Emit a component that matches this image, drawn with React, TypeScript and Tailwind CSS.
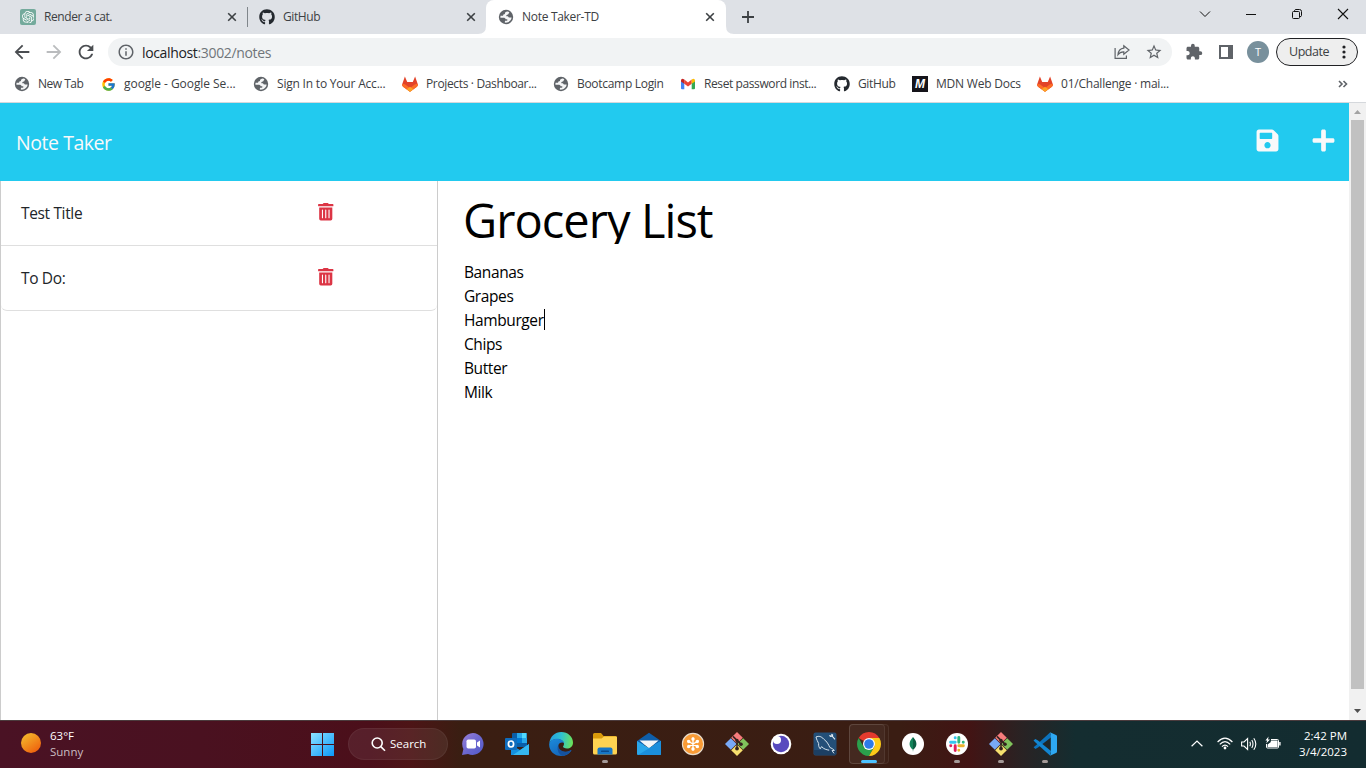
import React from "react";
import { FaGithub, FaPlus, FaSave, FaTrashAlt } from "react-icons/fa";
import { FcGoogle } from "react-icons/fc";
import { SiOpenai } from "react-icons/si";
import {
  MdArrowBack,
  MdArrowForward,
  MdExtension,
  MdInfoOutline,
  MdRefresh,
  MdStarBorder,
} from "react-icons/md";

/* ---------- small drawings ---------- */

function Globe() {
  return (
    <svg width="16" height="16" viewBox="0 0 16 16">
      <circle cx="8" cy="8" r="7.2" fill="#5f6368" />
      <path
        d="M9.4 2.4 C7.4 2.8 6.6 3.8 7 4.9 L5.4 5.6 L5 6.7 H2.6 C2.3 7.6 2.3 8.2 2.5 8.8 H5.2 C7 8.8 7.4 9.4 7.6 10.2 H8.8 C9.8 10.4 9.6 11.6 8.6 11.7 L7 11.8 L6.8 13.6 C10.6 14 13.4 11.6 13.6 8.6 H11.6 C10.4 8.6 10.4 7.6 10 7.2 H8.4 C8 6.4 8.8 5.8 9.8 5.6 C10.8 5.2 10.4 4 11.4 3.4 C10.8 2.8 10.2 2.4 9.4 2.4Z"
        fill="#f4f5f6"
      />
    </svg>
  );
}

function Gitlab() {
  return (
    <svg width="16" height="16" viewBox="0 0 16 16">
      <path d="M2.9 0.6 L5.2 6 H10.8 L13.1 0.6 L15.9 8.4 Q16 10 14.6 11 L8 15.8 L1.4 11 Q0 10 0.1 8.4Z" fill="#e24329" />
      <path d="M0.1 8.2 Q2.6 7.8 4.6 9.4 L8 12 L11.4 9.4 Q13.4 7.8 15.9 8.2 Q16 10 14.6 11 L8 15.8 L1.4 11 Q0 10 0.1 8.2Z" fill="#fc6d26" />
      <path d="M4.6 13.3 L8 10.8 L11.4 13.3 L8 15.8Z" fill="#fca326" />
    </svg>
  );
}

function Gmail() {
  return (
    <svg width="16" height="16" viewBox="0 0 16 16">
      <path d="M1 4.2 L4.3 6.6 V13.3 H2 Q1 13.3 1 12.3Z" fill="#4285f4" />
      <path d="M15 4.2 L11.7 6.6 V13.3 H14 Q15 13.3 15 12.3Z" fill="#34a853" />
      <path d="M4.3 3.6 L8 6.4 L11.7 3.6 V7.8 L8 10.6 L4.3 7.8Z" fill="#ea4335" />
      <path d="M1 4.5 Q1 2.7 2.6 2.7 L4.3 3.6 V7.8 L1 5.4Z" fill="#c5221f" />
      <path d="M15 4.5 Q15 2.7 13.4 2.7 L11.7 3.6 V7.8 L15 5.4Z" fill="#fbbc04" />
    </svg>
  );
}

function Mdn() {
  return (
    <span className="flex h-4 w-4 items-center justify-center bg-[#15141a] font-['Liberation_Sans',sans-serif] text-[12px] font-bold text-white italic">
      M
    </span>
  );
}

function Cross() {
  return (
    <svg width="10" height="10" viewBox="0 0 10 10" stroke="#3c4043" strokeWidth="1.6">
      <path d="M1.2 1.2 L8.8 8.8 M8.8 1.2 L1.2 8.8" />
    </svg>
  );
}

function Share() {
  return (
    <svg width="16" height="16" viewBox="0 0 16 16" fill="none" stroke="#5f6368" strokeWidth="1.2">
      <path d="M1.1 4 V14.4 H12.4 V11.6" />
      <path d="M9.8 1.8 L15 6 L9.8 10.2 V7.8 C7.2 7.7 5.4 8.6 4 10.6 C4.3 7.4 6.4 4.6 9.8 4.2Z" />
    </svg>
  );
}

/* ---------- browser window ---------- */

function TabStrip() {
  return (
    <div className="flex h-[34px] bg-[#dee1e6] text-[12px] text-[#3c4043]">
      <div className="flex w-[248px] items-center pl-5">
        <span className="flex h-4 w-4 items-center justify-center rounded-[2px] bg-[#74aa9c]">
          <SiOpenai size={12.5} color="#fff" />
        </span>
        <span className="ml-2 flex-1 tracking-[-0.4px]">Render a cat.</span>
        <span className="mr-[10px]"><Cross /></span>
        <span className="h-5 w-px bg-[#80868b]" />
      </div>
      <div className="flex w-[238px] items-center pl-[11px]">
        <FaGithub size={16} color="#24292f" />
        <span className="ml-2 flex-1 tracking-[-0.4px]">GitHub</span>
        <span className="mr-[10px]"><Cross /></span>
      </div>
      <div className="relative flex w-[240px] items-center rounded-t-[8px] bg-white pl-3">
        <svg className="absolute -left-2 bottom-0" width="8" height="8" viewBox="0 0 8 8">
          <path d="M8 0 V8 H0 Q8 8 8 0Z" fill="#fff" />
        </svg>
        <svg className="absolute -right-2 bottom-0" width="8" height="8" viewBox="0 0 8 8">
          <path d="M0 0 V8 H8 Q0 8 0 0Z" fill="#fff" />
        </svg>
        <Globe />
        <span className="ml-2 flex-1 tracking-[-0.3px]">Note Taker-TD</span>
        <span className="mr-[11px]"><Cross /></span>
      </div>
      <div className="flex flex-1 items-center pl-4">
        <svg width="12" height="12" viewBox="0 0 12 12" stroke="#3c4043" strokeWidth="1.8">
          <path d="M6 0 V12 M0 6 H12" />
        </svg>
      </div>
      <div className="flex items-center pr-[17px] pb-[6px] text-[#111]">
        <svg width="12" height="12" viewBox="0 0 12 12" fill="none" stroke="currentColor" strokeWidth="1">
          <path d="M1 3.5 L6 8.5 L11 3.5" />
        </svg>
        <svg className="ml-[34px]" width="12" height="12" viewBox="0 0 12 12" stroke="currentColor">
          <path d="M1 6.5 H11" />
        </svg>
        <svg className="ml-[34px]" width="12" height="12" viewBox="0 0 12 12" fill="none" stroke="currentColor">
          <rect x="1.5" y="3.5" width="7" height="7" rx="1" />
          <path d="M3.5 3 V2.5 Q4 1.5 5 1.5 H8.5 Q10.5 1.5 10.5 3.5 V7.5 Q10.5 8.5 9 8.8" />
        </svg>
        <svg className="ml-[34px]" width="12" height="12" viewBox="0 0 12 12" stroke="currentColor" strokeWidth="1.1">
          <path d="M1 1 L11 11 M11 1 L1 11" />
        </svg>
      </div>
    </div>
  );
}

function Toolbar() {
  return (
    <div className="flex h-9 items-center bg-white pl-[11px]">
      <MdArrowBack size={22} color="#4a4d51" />
      <MdArrowForward className="ml-[10px]" size={22} color="#babcbe" />
      <MdRefresh className="ml-[10px]" size={22} color="#4a4d51" />
      <div className="ml-[11px] flex h-7 w-[1064px] items-center rounded-full bg-[#f1f3f4] pl-[9px]">
        <MdInfoOutline size={18} color="#5f6368" />
        <span className="ml-[7px] flex-1 text-[14px] tracking-[-0.35px] text-[#70757a]">
          <span className="text-[#202124]">localhost</span>:3002/notes
        </span>
        <Share />
        <MdStarBorder className="mr-[9px] ml-[15px]" size={18} color="#5f6368" />
      </div>
      <MdExtension className="ml-[13px]" size={18} color="#5f6368" />
      <span className="ml-4 h-[14px] w-[14px] border-2 border-r-[5px] border-[#5f6368]" />
      <span className="ml-[14px] flex h-[22px] w-[22px] items-center justify-center rounded-full bg-[#78909c] text-[11px] text-white">
        T
      </span>
      <div className="ml-[7px] flex h-7 w-[82px] items-center rounded-full border border-[#202124] bg-[#eeeeee] pl-3">
        <span className="flex-1 text-[12.5px] tracking-[-0.45px] text-[#3c4043]">Update</span>
        <svg className="mr-[11px]" width="4" height="14" viewBox="0 0 4 14" fill="#202124">
          <circle cx="2" cy="2" r="1.6" />
          <circle cx="2" cy="7" r="1.6" />
          <circle cx="2" cy="12" r="1.6" />
        </svg>
      </div>
    </div>
  );
}

function Bookmark({ icon, label, className }: { icon: React.ReactNode; label: string; className: string }) {
  return (
    <div className={`flex shrink-0 items-center gap-2 whitespace-nowrap ${className}`}>
      <span className="flex h-4 w-4 shrink-0 items-center justify-center tracking-normal">{icon}</span>
      <span>{label}</span>
    </div>
  );
}

function BookmarksBar() {
  return (
    <div className="flex h-[33px] items-center border-b border-[#d5d8dc] bg-white pb-1 pl-[14px] text-[12px] text-[#3c4043]">
      <Bookmark className="w-[86px] tracking-[-0.5px]" icon={<Globe />} label="New Tab" />
      <Bookmark className="w-[153px] tracking-[-0.05px]" icon={<FcGoogle size={15} />} label="google - Google Se..." />
      <Bookmark className="w-[149px] tracking-[-0.2px]" icon={<Globe />} label="Sign In to Your Acc..." />
      <Bookmark className="w-[151px] tracking-[-0.35px]" icon={<Gitlab />} label="Projects · Dashboar..." />
      <Bookmark className="w-[127px] tracking-[-0.3px]" icon={<Globe />} label="Bootcamp Login" />
      <Bookmark className="w-[154px] tracking-[-0.4px]" icon={<Gmail />} label="Reset password inst..." />
      <Bookmark className="w-[78px] tracking-[-0.35px]" icon={<FaGithub size={16} color="#24292f" />} label="GitHub" />
      <Bookmark className="w-[125px] tracking-[-0.22px]" icon={<Mdn />} label="MDN Web Docs" />
      <Bookmark className="flex-1 tracking-[-0.23px]" icon={<Gitlab />} label="01/Challenge · mai..." />
      <svg className="mr-[18px]" width="10" height="8" viewBox="0 0 10 8" fill="none" stroke="#5f6368" strokeWidth="1.6">
        <path d="M1 1 L4 4 L1 7 M5.5 1 L8.5 4 L5.5 7" />
      </svg>
    </div>
  );
}

/* ---------- note taker page ---------- */

const notes = ["Test Title", "To Do:"];
const groceries = ["Bananas", "Grapes", "Hamburger", "Chips", "Butter", "Milk"];

function NotePage() {
  return (
    <div className="flex h-[617px] bg-white">
      <div className="flex w-[1349px] flex-col">
        <header className="flex h-[78px] shrink-0 items-center bg-[#22caef] pr-[13px] pl-4 text-[#f8f9fa]">
          <span className="flex-1 pt-0.5 text-[19.5px] tracking-[-0.45px]">Note Taker</span>
          <FaSave className="mb-[3px]" size={25} />
          <FaPlus className="mb-[3px] ml-[31px]" size={25} />
        </header>
        <div className="flex flex-1">
          <aside className="w-[438px] border-x border-[#ccc]">
            <ul className="rounded-b-[6px] border-b border-[#dfdfdf] text-[15.5px] tracking-[-0.35px] text-[#212529]">
              {notes.map((note, i) => (
                <li
                  key={note}
                  className={`flex items-center pl-5 ${i === 0 ? "h-[65px] border-b border-[#dfdfdf]" : "h-16"}`}
                >
                  <span className="w-[296px] pt-px">{note}</span>
                  <FaTrashAlt className="mb-0.5" size={17.5} color="#dc3545" />
                </li>
              ))}
            </ul>
          </aside>
          <main className="flex-1 pl-[25px] text-black">
            <h1 className="mt-2 h-[55px] overflow-hidden text-[47px] leading-[63px] tracking-[-0.95px] whitespace-nowrap">
              Grocery List
            </h1>
            <div className="mt-4 pl-px text-[15.5px] leading-6 tracking-[-0.4px]">
              {groceries.map((item) => (
                <div key={item} className="flex items-center">
                  {item}
                  {item === "Hamburger" && <span className="mb-0.5 h-[21px] w-px bg-black" />}
                </div>
              ))}
            </div>
          </main>
        </div>
      </div>
      <div className="flex w-[17px] flex-col items-center justify-between bg-[#f1f1f1]">
        <svg width="17" height="17" viewBox="0 0 17 17">
          <path d="M5 11 L8.5 7 L12 11Z" fill="#a3a3a3" />
        </svg>
        <div className="mb-[14px] h-[569px] w-[13px] bg-[#c1c1c1]" />
        <svg width="17" height="17" viewBox="0 0 17 17">
          <path d="M5 6 L12 6 L8.5 10Z" fill="#505050" />
        </svg>
      </div>
    </div>
  );
}

/* ---------- taskbar ---------- */

function Meet() {
  return (
    <svg width="24" height="24" viewBox="0 0 24 24">
      <defs>
        <linearGradient id="meet" x1="0" y1="0" x2="1" y2="1">
          <stop offset="0" stopColor="#9a80d8" />
          <stop offset="0.5" stopColor="#6d68cf" />
          <stop offset="1" stopColor="#5059c9" />
        </linearGradient>
      </defs>
      <path d="M12 1 A11 11 0 1 1 7 22 L1 23 L2.4 17 A11 11 0 0 1 12 1Z" fill="url(#meet)" />
      <rect x="5.5" y="7.5" width="9.5" height="9" rx="1.8" fill="#fff" />
      <path d="M16 10.5 L19 8.5 V15.5 L16 13.5Z" fill="#fff" />
    </svg>
  );
}

function Outlook() {
  return (
    <svg width="24" height="24" viewBox="0 0 24 24">
      <rect x="7" y="1" width="15" height="14" rx="1" fill="#0a5ea8" />
      <path d="M12 1 H17 V6 H12Z" fill="#28a8ea" />
      <path d="M17 1 H21.5 V6 H17Z" fill="#50d9ff" />
      <path d="M12 6 H17 V11 H12Z" fill="#0078d4" />
      <path d="M17 6 H22 V11 H17Z" fill="#28a8ea" />
      <path d="M6 23 V13 L15 18 L24 12 V22 Q24 23 23 23Z" fill="#1490df" />
      <path d="M8 23 L24 12 V22 Q24 23 23 23Z" fill="#35b8f1" />
      <rect x="0" y="6" width="12" height="12" rx="1" fill="#0f6cbd" />
      <ellipse cx="6" cy="12" rx="2.6" ry="3" fill="none" stroke="#fff" strokeWidth="1.7" />
    </svg>
  );
}

function Edge() {
  return (
    <svg width="24" height="24" viewBox="0 0 24 24">
      <defs>
        <linearGradient id="edgeTop" x1="0" y1="0.3" x2="1" y2="0.4">
          <stop offset="0" stopColor="#249ee0" />
          <stop offset="0.5" stopColor="#2fc2d0" />
          <stop offset="1" stopColor="#6be35a" />
        </linearGradient>
        <linearGradient id="edgeLow" x1="0" y1="0" x2="0.6" y2="1">
          <stop offset="0" stopColor="#1b8bdc" />
          <stop offset="1" stopColor="#1464b8" />
        </linearGradient>
      </defs>
      <path d="M0.3 11 C1.2 4.4 6.2 0 12.2 0 C19 0 24 5 24 10.4 C24 14.4 21 16.4 18 16.4 C15.4 16.4 14 15.6 14 14.8 C14 14 15 13.6 15 11.8 C15 9.4 12 7 8.4 7 C4.4 7 1.4 9 0.3 11Z" fill="url(#edgeTop)" />
      <path d="M0.2 12 C0.6 9 4 6.8 8.2 6.8 C12 6.8 15 9 15.2 11.6 C14.4 9.8 9.6 10 9.2 14 C9 18.4 14 21 19 19.4 C21 18.6 22 17.8 22.4 18.4 C20 22 16.4 24 12.2 24 C5 24 -0.2 18.4 0.2 12Z" fill="url(#edgeLow)" />
      <path d="M9.4 13 C7.6 16 8.8 22 13.4 23.9 C17 23.6 20.4 21.8 22.4 18.6 C22.2 17.8 21 18.8 19 19.4 C14 20.8 9 17.6 9.4 13Z" fill="#15529f" />
    </svg>
  );
}

function Folder() {
  return (
    <svg width="24" height="24" viewBox="0 0 24 24">
      <path d="M0 2.5 Q0 1 1.5 1 H8 L10.6 4 H22.5 Q24 4 24 5.5 V9 H0Z" fill="#d99a0b" />
      <path d="M0 6.5 H8.6 L11 4.5 H23 Q24 4.5 24 5.5 V21 Q24 22.5 22.4 22.5 H1.6 Q0 22.5 0 21Z" fill="#ffd351" />
      <path d="M4.5 22.5 V17.5 Q4.5 15.5 6.5 15.5 H17.5 Q19.5 15.5 19.5 17.5 V22.5Z" fill="#1777c6" />
      <rect x="8" y="18.6" width="8" height="1.5" rx="0.7" fill="#0a4a8c" />
    </svg>
  );
}

function Mail() {
  return (
    <svg width="24" height="24" viewBox="0 0 24 24">
      <path d="M0 9 L12 0.8 L24 9 V13 H0Z" fill="#0f5ea9" />
      <path d="M2.5 8.5 H21.5 L12 16.5Z" fill="#f3f6f8" />
      <path d="M0 9 L12 16 L24 9 V22 Q24 23 23 23 H1 Q0 23 0 22Z" fill="#2aa7ea" />
      <path d="M1 23 L24 9 V22 Q24 23 23 23Z" fill="#1b8fdc" />
    </svg>
  );
}

function Snowflake() {
  return (
    <svg width="24" height="24" viewBox="0 0 24 24">
      <circle cx="12" cy="12" r="10.6" fill="#f99b36" stroke="#e9dccb" strokeWidth="1.1" />
      <g stroke="#fff" strokeWidth="1.3" strokeLinecap="round">
        <path d="M12 6 V18 M6.8 9 L17.2 15 M17.2 9 L6.8 15" />
      </g>
      <g fill="#fff">
        <circle cx="12" cy="7" r="1.7" />
        <circle cx="12" cy="17" r="1.7" />
        <circle cx="7.7" cy="9.5" r="1.7" />
        <circle cx="16.3" cy="9.5" r="1.7" />
        <circle cx="7.7" cy="14.5" r="1.7" />
        <circle cx="16.3" cy="14.5" r="1.7" />
      </g>
    </svg>
  );
}

function GitBash() {
  return (
    <svg width="24" height="24" viewBox="0 0 24 24">
      <path d="M12 0 L17.8 5.8 L12 11.6 L6.2 5.8Z" fill="#f77c7c" />
      <path d="M18.2 6.2 L24 12 L18.2 17.8 L12.4 12Z" fill="#80c35c" />
      <path d="M5.8 6.2 L11.6 12 L5.8 17.8 L0 12Z" fill="#78a9f7" />
      <path d="M12 12.4 L17.8 18.2 L12 24 L6.2 18.2Z" fill="#f6df6e" />
      <g stroke="#33221e" strokeWidth="1.5" fill="none">
        <path d="M8 4.4 L12 8.4 V17 M12 8.6 L16.4 12.4" />
      </g>
      <g fill="#33221e">
        <circle cx="12" cy="8.4" r="1.7" />
        <circle cx="16" cy="12.2" r="1.8" />
        <circle cx="12" cy="16.6" r="1.9" />
      </g>
    </svg>
  );
}

function Insomnia() {
  return (
    <svg width="24" height="24" viewBox="0 0 24 24">
      <circle cx="12" cy="12" r="10.3" fill="#fff" />
      <circle cx="12" cy="12" r="8.2" fill="#5849be" />
      <circle cx="8" cy="8" r="4" fill="#fff" />
    </svg>
  );
}

function Workbench() {
  return (
    <svg width="24" height="24" viewBox="0 0 24 24">
      <rect x="0.5" y="0.5" width="23" height="23" rx="2" fill="#234f78" />
      <path d="M1 18 H23 V22 Q23 23 22 23 H2 Q1 23 1 22Z" fill="#1c3f63" />
      <path d="M3 5 C6 3.6 8.6 4.6 10.6 7 C14 9.4 15.6 12.6 16.8 15.4 C18.4 16 20 17 21.4 18.4 L19 18.6 L21 21.4 M3 5 C3.6 7.8 4.8 9.6 5.6 11.4 C5.4 14 6.2 15.8 7.2 16.8 L8.6 14.6 C10.8 17 13.4 17.8 16.2 18.2" fill="none" stroke="#d6e2ec" strokeWidth="1" />
      <path d="M16 3 L17 5 L19 4.8 L21.6 7.8 L22.4 7 L20 4.2 L20.2 2.4 L18 1.8 L18.6 3.6Z" fill="#e5edf3" />
    </svg>
  );
}

function ChromeLogo() {
  return (
    <svg width="24" height="24" viewBox="0 0 24 24">
      <path d="M12 0 A12 12 0 0 1 22.39 6 H12 L6.8 9 L1.61 6 A12 12 0 0 1 12 0Z" fill="#e33b2e" />
      <path d="M1.61 6 A12 12 0 0 0 12 24 L17.2 15 L12 17 L6.8 15Z" fill="#2aa04c" />
      <path d="M22.39 6 A12 12 0 0 1 12 24 L17.2 15 Q18.6 9 12 6Z" fill="#fccb18" />
      <circle cx="12" cy="12" r="6" fill="#fff" />
      <circle cx="12" cy="12" r="4.8" fill="#2c7bea" />
    </svg>
  );
}

function Mongo() {
  return (
    <svg width="24" height="24" viewBox="0 0 24 24">
      <circle cx="12" cy="12" r="11" fill="#fff" />
      <path d="M12 5 C9.2 8 8.4 10.4 8.6 12.6 C8.8 15 10.4 16.8 11.7 17.6 L12 20Z" fill="#12845a" />
      <path d="M12 5 C14.8 8 15.6 10.4 15.4 12.6 C15.2 15 13.6 16.8 12.3 17.6 L12 20Z" fill="#0b5e42" />
    </svg>
  );
}

function Slack() {
  return (
    <svg width="24" height="24" viewBox="0 0 24 24">
      <circle cx="12" cy="12" r="11" fill="#fff" />
      <g fill="none" strokeWidth="2.9" strokeLinecap="round">
        <path d="M10.2 5.8 V5.9 M5.6 10.2 H10.2" stroke="#36c5f0" />
        <path d="M13.8 5.4 V10.2 M18.2 10.2 H18.3" stroke="#2eb67d" />
        <path d="M13.8 13.8 H18.4 M13.8 18.2 V18.3" stroke="#ecb22e" />
        <path d="M10.2 13.8 V18.6 M5.7 13.8 H5.8" stroke="#e01e5a" />
      </g>
    </svg>
  );
}

function VsCode() {
  return (
    <svg width="24" height="24" viewBox="0 0 24 24">
      <path d="M17 0.4 L3 13.2 L0.6 15.2 L2.4 17 L5 15.6 L18.5 5Z" fill="#0c73bd" />
      <path d="M0.5 8.6 L2.4 7 L5 8.4 L18 19 L17 23.6 L3 11Z" fill="#1286d2" />
      <path d="M17 0.2 L23 3 Q24 3.4 24 4.6 V19.4 Q24 20.6 23 21 L17 23.8 L17.8 21.6 V2.4Z" fill="#2ea8f2" />
    </svg>
  );
}

function TaskIcon({ children, running, active }: { children: React.ReactNode; running?: boolean; active?: boolean }) {
  return (
    <div className="relative flex h-12 w-11 items-center justify-center pb-0.5">
      {active && <span className="absolute top-[3px] left-[2px] h-10 w-10 rounded-[4px] border border-white/7 bg-white/2" />}
      {active && <span className="absolute top-[3px] left-[2px] h-10 w-9 rounded-[4px] border border-white/7 bg-white/4" />}
      <span className="relative">{children}</span>
      {running && <span className="absolute bottom-[6px] left-[19px] h-[3px] w-[6px] rounded-full bg-[#a49a98]" />}
      {active && <span className="absolute bottom-[6px] left-[14px] h-[3px] w-4 rounded-full bg-[#4cc2ff]" />}
    </div>
  );
}

function Taskbar() {
  return (
    <div className="flex h-12 items-center border-t border-[#4b3b3d] bg-[linear-gradient(90deg,#4a1224_0px,#4a1120_200px,#4b0f1a_370px,#4d1416_410px,#3a1e12_460px,#3a1d13_900px,#421414_970px,#2a2223_1020px,#142d30_1075px,#132c30_1366px)] text-[11.5px] text-white">
      <svg className="ml-[21px] mb-[3px]" width="20" height="20" viewBox="0 0 20 20">
        <defs>
          <linearGradient id="sun" x1="0.1" y1="0" x2="0.8" y2="1">
            <stop offset="0" stopColor="#f5bf2e" />
            <stop offset="1" stopColor="#ee5d0c" />
          </linearGradient>
        </defs>
        <circle cx="10" cy="10" r="10" fill="url(#sun)" />
      </svg>
      <div className="ml-[9px] w-[260px] pb-0.5 leading-4">
        <div>63°F</div>
        <div className="text-[#cbbcc1]">Sunny</div>
      </div>
      <svg className="ml-px" width="23" height="23" viewBox="0 0 23 23">
        <defs>
          <linearGradient id="win" gradientUnits="userSpaceOnUse" x1="0" y1="0" x2="23" y2="23">
            <stop offset="0" stopColor="#8de3ff" />
            <stop offset="1" stopColor="#0a98fb" />
          </linearGradient>
        </defs>
        <path d="M0 0 H11 V11 H0Z M12 0 H23 V11 H12Z M0 12 H11 V23 H0Z M12 12 H23 V23 H12Z" fill="url(#win)" />
      </svg>
      <div className="mb-px ml-[14px] flex h-8 w-[100px] items-center rounded-full border border-white/5 bg-white/7 pl-[22px]">
        <svg width="15" height="15" viewBox="0 0 15 15" fill="none" stroke="#fff" strokeWidth="1.6">
          <circle cx="6.2" cy="6" r="5" />
          <path d="M9.8 9.6 L14 13.8" />
        </svg>
        <span className="ml-1">Search</span>
      </div>
      <div className="ml-[3px] flex flex-1">
        <TaskIcon><Meet /></TaskIcon>
        <TaskIcon><Outlook /></TaskIcon>
        <TaskIcon><Edge /></TaskIcon>
        <TaskIcon running><Folder /></TaskIcon>
        <TaskIcon><Mail /></TaskIcon>
        <TaskIcon><Snowflake /></TaskIcon>
        <TaskIcon><GitBash /></TaskIcon>
        <TaskIcon><Insomnia /></TaskIcon>
        <TaskIcon><Workbench /></TaskIcon>
        <TaskIcon active><ChromeLogo /></TaskIcon>
        <TaskIcon><Mongo /></TaskIcon>
        <TaskIcon running><Slack /></TaskIcon>
        <TaskIcon running><GitBash /></TaskIcon>
        <TaskIcon running><VsCode /></TaskIcon>
      </div>
      <svg className="mb-0.5" width="12" height="7" viewBox="0 0 12 7" fill="none" stroke="#fff" strokeWidth="1.2">
        <path d="M0.6 6.3 L6 1 L11.4 6.3" />
      </svg>
      <svg className="mb-0.5 ml-[14px]" width="16" height="13" viewBox="0 0 16 13" fill="none" stroke="#fff" strokeWidth="1.2">
        <path d="M0.6 5 Q8 -2.6 15.4 5" />
        <path d="M2.8 7.4 Q8 2 13.2 7.4" />
        <path d="M5 9.6 Q8 6.6 11 9.6" />
        <circle cx="8" cy="11" r="1.4" fill="#fff" stroke="none" />
      </svg>
      <svg className="mb-0.5 ml-2" width="16" height="14" viewBox="0 0 16 14" fill="none" stroke="#fff" strokeWidth="1.1">
        <path d="M0.6 5 H3 L6.6 1.6 V12.4 L3 9 H0.6Z" />
        <path d="M8.8 4.8 Q10 7 8.8 9.2 M10.8 3 Q13.2 7 10.8 11 M12.8 1.2 Q16.8 7 12.8 12.8" />
      </svg>
      <svg className="mb-[3px] ml-2" width="16" height="14" viewBox="0 0 16 14">
        <path d="M6 3.5 H12.5 Q13.5 3.5 13.5 4.5 V11 Q13.5 12 12.5 12 H2.5 Q1.5 12 1.5 11 V8" fill="none" stroke="#fff" />
        <path d="M6 4.6 H12.6 V11 H2.6 V8.6 L5.6 6.2Z" fill="#fff" />
        <path d="M14.2 6 H15.6 V9.6 H14.2Z" fill="#fff" />
        <path d="M3.6 0.4 L0.4 4.4 H2.2 L1.2 7.6 L5 3.4 H3Z" fill="#fff" />
      </svg>
      <div className="mr-[19px] w-[66px] pb-0.5 text-right leading-4 whitespace-nowrap">
        <div>2:42 PM</div>
        <div>3/4/2023</div>
      </div>
    </div>
  );
}

export default function App() {
  return (
    <div className="flex h-[768px] w-[1366px] flex-col overflow-hidden bg-white font-['Open_Sans','Noto_Sans',sans-serif]">
      <TabStrip />
      <Toolbar />
      <BookmarksBar />
      <NotePage />
      <Taskbar />
    </div>
  );
}
